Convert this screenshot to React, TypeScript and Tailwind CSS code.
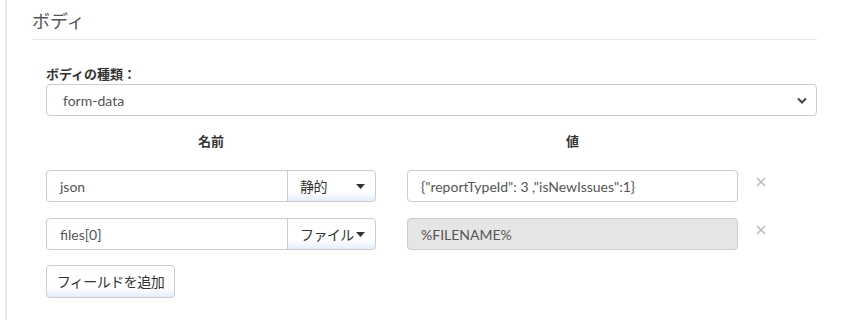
import React from "react";

const font = { fontFamily: '"Lato", "Noto Sans CJK JP", sans-serif' };

function Caret() {
  return (
    <svg width="9" height="5" viewBox="0 0 9 5" className="ml-auto shrink-0">
      <path d="M0 0 L9 0 L4.5 5 Z" fill="#333" />
    </svg>
  );
}

function XIcon() {
  return (
    <svg width="10" height="10" viewBox="0 0 10 10">
      <path d="M1 1 L9 9 M9 1 L1 9" stroke="#b5b5b5" strokeWidth="1.4" />
    </svg>
  );
}

function Row({ name, type, value, disabled }: { name: string; type: string; value: string; disabled?: boolean }) {
  return (
    <div className="grid grid-cols-[330px_331px_auto] gap-x-[31px] items-center">
      <div className="flex h-[32px]">
        <div className="flex-1 flex items-center border border-[#cccccc] rounded-l-[4px] pl-[13px] text-[14px] text-[#555]">
          {name}
        </div>
        <div className="w-[89px] shrink-0 -ml-px flex items-center border border-[#cccccc] rounded-r-[4px] pl-[12px] pr-[10px] text-[14px] text-[#333] bg-gradient-to-b from-white from-70% to-[#e3eefa]">
          <span className="whitespace-nowrap tracking-[-0.6px]">{type}</span>
          <Caret />
        </div>
      </div>
      <div
        className={
          "h-[32px] flex items-center border border-[#cccccc] rounded-[4px] pl-[13px] text-[14px] text-[#555] " +
          (disabled ? "bg-[#e5e5e5]" : "bg-white")
        }
      >
        {value}
      </div>
      <div className="flex items-start h-[32px] pt-[7px] -ml-[13px]">
        <XIcon />
      </div>
    </div>
  );
}

export default function App() {
  return (
    <div className="w-[842px] h-[320px] bg-white overflow-hidden pl-[5px]" style={font}>
      <div className="h-full border-l-2 border-[#ebebeb] pl-[25px] pr-[25px]">
        <div className="pt-[9px] h-[40px] text-[18px] leading-[25px] text-[#555] border-b border-[#e5e5e5]">ボディ</div>
        <div className="pl-[14px]">
          <div className="mt-[25px] text-[13px] leading-[18px] font-bold text-[#333]">ボディの種類：</div>
          <div className="mt-[1px] h-[32px] flex items-center border border-[#cccccc] rounded-[4px] pl-[16px] pr-[9px] text-[14px] text-[#555]">
            <span>form-data</span>
            <svg width="10" height="7" viewBox="0 0 10 7" className="ml-auto">
              <path d="M1 1.5 L5 5.5 L9 1.5" stroke="#444" strokeWidth="2" fill="none" />
            </svg>
          </div>
          <div className="grid grid-cols-[330px_331px] gap-x-[31px] mt-[16px] text-[13px] leading-[18px] font-bold text-[#333] text-center">
            <div>名前</div>
            <div>値</div>
          </div>
          <div className="mt-[20px] flex flex-col gap-[16px]">
            <Row name="json" type="静的" value={'{"reportTypeId": 3 ,"isNewIssues":1}'} />
            <Row name="files[0]" type="ファイル" value="%FILENAME%" disabled />
          </div>
          <div className="mt-[15px]">
            <button className="h-[33px] w-[129px] border border-[#cccccc] rounded-[4px] text-[14px] tracking-[-0.5px] text-[#333] bg-gradient-to-b from-white from-70% to-[#e3eefa]">
              フィールドを追加
            </button>
          </div>
        </div>
      </div>
    </div>
  );
}
